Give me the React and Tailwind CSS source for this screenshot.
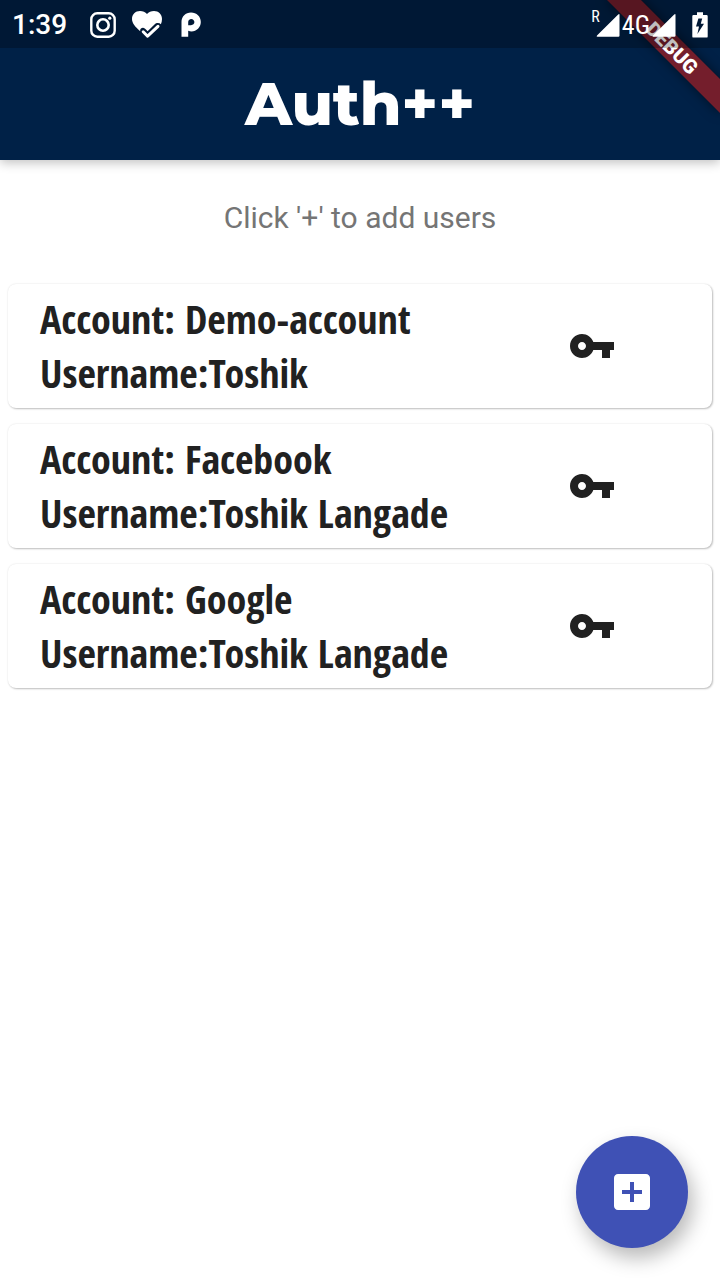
import React from "react";

const users = [
  { id: 1, account: "Demo-account", username: "Toshik" },
  { id: 2, account: "Facebook", username: "Toshik Langade" },
  { id: 3, account: "Google", username: "Toshik Langade" },
];

function InstagramIcon() {
  return (
    <svg viewBox="0 0 26 26" className="h-[26px] w-[26px]" fill="none" stroke="currentColor" aria-hidden="true">
      <rect x="1.3" y="1.3" width="23.4" height="23.4" rx="6" strokeWidth="2.4" />
      <circle cx="13" cy="13" r="5.7" strokeWidth="2.6" />
      <circle cx="19.8" cy="6.2" r="1.6" fill="currentColor" stroke="none" />
    </svg>
  );
}

function HeartCheckIcon() {
  return (
    <svg viewBox="0 0 30 28" className="h-7 w-[30px]" aria-hidden="true">
      <path
        fill="currentColor"
        d="M8 0C3.400 0 0 3.400 0 8C0 12 3 15.200 6 18.200L8.200 20.200C7.800 18 9.200 16.800 11 16.800C12.200 16.800 13 17.400 15.600 20.200L22.500 13.400C24.500 11.500 27.200 11.600 28.900 13.200C29.600 11.500 30 9.800 30 8C30 3.400 26.600 0 22 0C19.200 0 16.600 1.200 15 3C13.400 1.200 10.800 0 8 0Z"
      />
      <path
        fill="none"
        stroke="currentColor"
        strokeWidth="3"
        strokeLinejoin="round"
        strokeLinecap="round"
        d="M11.200 20.800L15.600 25.200L26 15.400"
      />
    </svg>
  );
}

function ParkingIcon() {
  return (
    <svg viewBox="0 0 20 26" className="h-[26px] w-5" aria-hidden="true">
      <path
        fill="currentColor"
        fillRule="evenodd"
        d="M10 0.500C15.600 0.500 19.800 4.600 19.800 10C19.800 15.400 15.600 19.400 10.500 19.400C9.400 19.400 8.200 19.200 7.200 18.800V24.800H0.500V10C0.500 4.600 4.600 0.500 10 0.500ZM7.200 13.200H10C12 13.200 13.400 11.900 13.400 10.100C13.400 8.300 12 6.900 10.200 6.900C8.500 6.900 7.200 8.200 7.200 10Z"
      />
    </svg>
  );
}

function SignalIcon() {
  return (
    <svg viewBox="0 0 24 24" className="h-6 w-6" fill="currentColor" aria-hidden="true">
      <path d="M1.500 23.800H22.400Q23.500 23.800 23.500 22.700V2Q23.500 0.300 22.200 1.600L1 22.600Q0 23.800 1.500 23.800Z" />
    </svg>
  );
}

function BatteryIcon() {
  return (
    <svg viewBox="0 0 16 26" className="h-[26px] w-4" aria-hidden="true">
      <path
        fill="currentColor"
        fillRule="evenodd"
        d="M5 0.200H11V3H14.500Q15.700 3 15.700 4.200V24.400Q15.700 25.600 14.500 25.600H1.500Q0.300 25.600 0.300 24.400V4.200Q0.300 3 1.500 3H5ZM10.200 6.500H6.400L4 14.500H7L5.400 22L12 11.800H8.800Z"
      />
    </svg>
  );
}

function StatusBar() {
  return (
    <div className="relative z-20 flex h-12 items-center justify-between bg-black/25 px-3 pt-px text-white">
      <div className="flex items-center">
        <span className="text-[28px] leading-8 font-medium">1:39</span>
        <span className="ml-[23px] flex items-center gap-4">
          <InstagramIcon />
          <HeartCheckIcon />
          <span className="ml-[3px] flex">
            <ParkingIcon />
          </span>
        </span>
      </div>
      <div className="flex items-center font-['Roboto_Condensed','Roboto',sans-serif]">
        <span className="-mr-1 mb-4 text-base leading-4">R</span>
        <SignalIcon />
        <span className="ml-0.5 text-[26px] leading-8">4G</span>
        <span className="ml-0.5 flex">
          <SignalIcon />
        </span>
        <span className="ml-4 flex">
          <BatteryIcon />
        </span>
      </div>
    </div>
  );
}

function DebugBanner() {
  return (
    <div className="pointer-events-none absolute top-0 right-0 z-10 h-32 w-32 overflow-hidden">
      <div className="absolute top-9 -right-8 h-6 w-40 rotate-45 bg-[#b71c1c]/63 text-center text-[20px] leading-6 font-black text-white shadow-[0_0_12px_rgba(0,0,0,0.5)]">
        DEBUG
      </div>
    </div>
  );
}

function UserCard({ user }) {
  return (
    <li className="flex items-center justify-between rounded-lg bg-white py-2 pr-24 pl-8 shadow-[1px_1px_2px_rgba(0,0,0,0.24),0_0_2px_rgba(0,0,0,0.1)]">
      <div className="font-['Open_Sans_Condensed','Open_Sans',sans-serif] text-[40px] leading-[54px] font-bold text-[#212121]">
        <p>Account: {user.account}</p>
        <p>Username:{user.username}</p>
      </div>
      <button type="button" aria-label={`Show code for ${user.account}`} className="shrink-0 text-[#212121]">
        <svg viewBox="0 0 24 24" className="h-12 w-12" fill="currentColor" aria-hidden="true">
          <path d="M12.650 10C11.830 7.670 9.610 6 7 6c-3.310 0-6 2.690-6 6s2.690 6 6 6c2.610 0 4.830-1.670 5.650-4H17v4h4v-4h2v-4H12.650zM7 14c-1.100 0-2-.9-2-2s.9-2 2-2 2 .9 2 2-.9 2-2 2z" />
        </svg>
      </button>
    </li>
  );
}

export default function App() {
  return (
    <div className="min-h-screen bg-white font-['Roboto',sans-serif]">
      <header className="relative bg-[#002147] shadow-[0_3px_10px_rgba(0,0,0,0.24)]">
        <StatusBar />
        <h1 className="flex h-28 items-center justify-center font-['Montserrat','Inter',sans-serif] text-[60px] font-extrabold text-white">
          Auth++
        </h1>
        <DebugBanner />
      </header>
      <main>
        <p className="py-10 text-center text-[30px] leading-9 text-[#757575]">Click '+' to add users</p>
        <ul className="flex flex-col gap-4 px-2 py-2">
          {users.map((user) => (
            <UserCard key={user.id} user={user} />
          ))}
        </ul>
      </main>
      <button
        type="button"
        aria-label="Add user"
        className="fixed right-8 bottom-8 flex h-28 w-28 items-center justify-center rounded-full bg-[#3f51b5] text-white shadow-[5px_10px_20px_rgba(0,0,0,0.28)]"
      >
        <svg viewBox="0 0 24 24" className="h-12 w-12" fill="currentColor" aria-hidden="true">
          <path d="M19 3H5c-1.110 0-2 .9-2 2v14c0 1.100.89 2 2 2h14c1.100 0 2-.9 2-2V5c0-1.100-.9-2-2-2zm-2 10h-4v4h-2v-4H7v-2h4V7h2v4h4v2z" />
        </svg>
      </button>
    </div>
  );
}
